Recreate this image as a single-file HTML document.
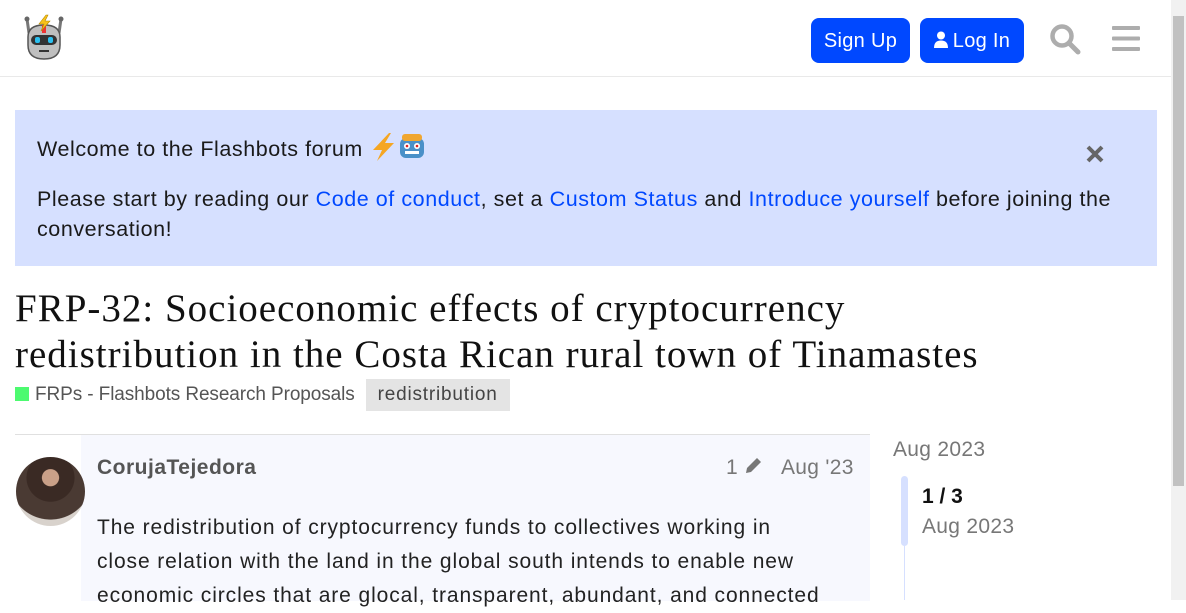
<!DOCTYPE html>
<html><head><meta charset="utf-8"><style>
*{margin:0;padding:0;box-sizing:border-box}
body{width:1186px;height:600px;overflow:hidden;background:#fff;font-family:"Liberation Sans","DejaVu Sans",sans-serif;color:#222;position:relative}
.hdr{position:absolute;left:0;top:0;width:1171px;height:77px;border-bottom:1px solid #e9e9e9;background:#fff}
.btn{position:absolute;top:18px;height:45px;background:#0048ff;color:#fff;border-radius:8px;font-size:20px;line-height:45px;text-align:center;letter-spacing:0.3px}
.sb{position:absolute;left:1171px;top:0;width:15px;height:600px;background:#f1f1f1}
.sb i{position:absolute;left:2px;top:16px;width:11px;height:470px;background:#c1c1c1}
.banner{position:absolute;left:15px;top:110px;width:1142px;height:156px;background:#d6e0ff}
.banner p{position:absolute;left:22px;font-size:21.5px;line-height:30px;color:#1a1a1a;letter-spacing:0.56px}
a{color:#0048ff;text-decoration:none}
h1{position:absolute;left:15px;top:286px;font-family:"Liberation Serif",serif;font-weight:normal;font-size:39px;line-height:46px;color:#111;letter-spacing:1px}
.cat{position:absolute;left:15px;top:379px;height:32px;font-size:19px;line-height:32px;color:#555;letter-spacing:-0.1px}
.post{position:absolute;left:15px;top:434px;width:855px;height:166px;border-top:1px solid #e0e0e0}
.pbody{position:absolute;left:66px;top:0;width:789px;height:166px;background:#f7f8fe}
.txt{position:absolute;left:82px;top:76px;font-size:21px;line-height:34px;color:#222;letter-spacing:0.9px}
</style></head><body>
<div class="hdr">
<svg style="position:absolute;left:22px;top:13px" width="44" height="48" viewBox="0 0 44 48">
<line x1="5" y1="6" x2="7" y2="20" stroke="#777" stroke-width="3"/><line x1="39" y1="6" x2="37" y2="20" stroke="#777" stroke-width="3"/>
<circle cx="5" cy="6" r="2.5" fill="#666"/><circle cx="39" cy="6" r="2.5" fill="#666"/>
<path d="M6 24 Q6 12 22 12 Q38 12 38 24 L38 32 Q38 46 22 46 Q6 46 6 32 Z" fill="#bfbfbf" stroke="#555" stroke-width="1.5"/>
<rect x="20" y="12" width="4" height="8" fill="#e33"/>
<path d="M24 2 L17 11 L22 11 L19 18 L28 8 L23 8 L26 2Z" fill="#f7c21c" stroke="#b88a00" stroke-width="0.6"/>
<rect x="9" y="22" width="26" height="10" rx="5" fill="#333"/>
<rect x="13" y="24" width="5" height="6" rx="2" fill="#2bc0f0"/><rect x="26" y="24" width="5" height="6" rx="2" fill="#2bc0f0"/>
<rect x="17" y="37" width="10" height="2" fill="#333"/>
</svg>
<div class="btn" style="left:811px;width:99px;line-height:47px">Sign Up</div>
<div class="btn" style="left:920px;width:104px;line-height:47px"><svg width="14" height="17" viewBox="0 0 14 17" style="vertical-align:-1px;margin-right:5px"><circle cx="7" cy="4.5" r="4" fill="#fff"/><path d="M0 17 Q0 9.5 7 9.5 Q14 9.5 14 17Z" fill="#fff"/></svg>Log In</div>
<svg style="position:absolute;left:1049px;top:23px" width="32" height="32" viewBox="0 0 32 32"><circle cx="13" cy="13" r="9.5" fill="none" stroke="#adadad" stroke-width="4.5"/><line x1="20" y1="20" x2="29" y2="29" stroke="#adadad" stroke-width="5" stroke-linecap="round"/></svg>
<svg style="position:absolute;left:1112px;top:26px" width="28" height="25" viewBox="0 0 28 25"><rect y="0" width="28" height="4" rx="1" fill="#adadad"/><rect y="10.5" width="28" height="4" rx="1" fill="#adadad"/><rect y="21" width="28" height="4" rx="1" fill="#adadad"/></svg>
</div>
<div class="sb"><i></i></div>
<div class="banner">
<p style="top:22px">Welcome to the Flashbots forum <svg width="28" height="30" viewBox="0 0 28 30" style="vertical-align:-6px"><path d="M20 1 L4 18 L13 18 L8 29 L25 11 L16 11 L22 1Z" fill="#f5a623"/></svg><svg width="30" height="28" viewBox="0 0 30 28" style="vertical-align:-5px"><rect x="3" y="5" width="24" height="20" rx="6" fill="#4a90c8"/><rect x="5" y="1" width="20" height="7" rx="3" fill="#f0a630"/><circle cx="10" cy="13" r="3" fill="#fff"/><circle cx="20" cy="13" r="3" fill="#fff"/><circle cx="10" cy="13" r="1.3" fill="#d22"/><circle cx="20" cy="13" r="1.3" fill="#d22"/><rect x="8" y="18" width="14" height="3" fill="#fff"/></svg></p>
<svg style="position:absolute;left:1071px;top:35px" width="18" height="18" viewBox="0 0 18 18"><path d="M2 2L16 16M16 2L2 16" stroke="#666" stroke-width="4"/></svg>
<p style="top:74px">Please start by reading our <a>Code of conduct</a>, set a <a>Custom Status</a> and <a>Introduce yourself</a> before joining the<br>conversation!</p>
</div>
<h1>FRP-32: Socioeconomic effects of cryptocurrency<br>redistribution in the Costa Rican rural town of Tinamastes</h1>
<div class="cat"><span style="display:inline-block;width:14px;height:14px;background:#4dfa70;vertical-align:-1px;margin-right:6px"></span>FRPs - Flashbots Research Proposals<span style="display:inline-block;margin-left:11px;background:#e4e4e4;padding:0 12px;color:#444;letter-spacing:0.8px">redistribution</span></div>
<div class="post">
<div class="pbody"></div>
<div style="position:absolute;left:1px;top:22px;width:69px;height:69px;border-radius:50%;background:radial-gradient(circle at 50% 30%,#c9a088 0 14%,#3a2a24 15% 40%,#4a3a33 41% 70%,#d8d2cc 71%)"></div>
<div style="position:absolute;left:82px;top:21px;font-size:21px;font-weight:bold;color:#555;letter-spacing:0.5px">CorujaTejedora</div>
<div style="position:absolute;left:711px;top:21px;font-size:21px;color:#777">1 <svg width="18" height="18" viewBox="0 0 18 18" style="vertical-align:-1px"><path d="M2 16 L3 11 L13 1 L17 5 L7 15Z" fill="#777"/></svg></div>
<div style="position:absolute;left:766px;top:21px;font-size:21px;color:#777;letter-spacing:0.3px">Aug '23</div>
<div class="txt">The redistribution of cryptocurrency funds to collectives working in<br>close relation with the land in the global south intends to enable new<br>economic circles that are glocal, transparent, abundant, and connected</div>
</div>
<div style="position:absolute;left:893px;top:438px;font-size:21px;color:#777;letter-spacing:0.3px">Aug 2023</div>
<div style="position:absolute;left:901px;top:476px;width:7px;height:70px;background:#d6e0ff;border-radius:4px"></div>
<div style="position:absolute;left:904px;top:546px;width:1px;height:54px;background:#d6e0ff"></div>
<div style="position:absolute;left:922px;top:485px;font-size:21px;font-weight:bold;color:#111">1 / 3</div>
<div style="position:absolute;left:922px;top:515px;font-size:21px;color:#777;letter-spacing:0.3px">Aug 2023</div>
</body></html>
